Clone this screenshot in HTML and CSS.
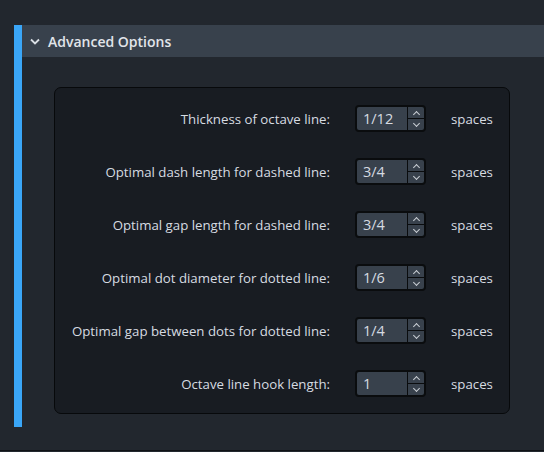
FILE: index.html
```html
<!DOCTYPE html>
<html lang="en">
<head>
  <meta charset="UTF-8">
  <title>Advanced Options</title>
  <link rel="stylesheet" href="styles.css">
</head>
<body>
  <div class="page">
    <div class="section">
      <div class="section-head">
        <svg class="chevron" width="10" height="7" viewBox="0 0 10 7"><path d="M1 1.5 L5 5.5 L9 1.5" fill="none" stroke="#d9dee4" stroke-width="1.8"/></svg>
        <span>Advanced Options</span>
      </div>
      <div class="section-body">
        <div class="options">
          <div class="row">
            <label>Thickness of octave line:</label>
            <div class="spin"><span class="value">1/12</span><span class="arrows"><i class="up"></i><i class="down"></i></span></div>
            <span class="unit">spaces</span>
          </div>
          <div class="row">
            <label>Optimal dash length for dashed line:</label>
            <div class="spin"><span class="value">3/4</span><span class="arrows"><i class="up"></i><i class="down"></i></span></div>
            <span class="unit">spaces</span>
          </div>
          <div class="row">
            <label>Optimal gap length for dashed line:</label>
            <div class="spin"><span class="value">3/4</span><span class="arrows"><i class="up"></i><i class="down"></i></span></div>
            <span class="unit">spaces</span>
          </div>
          <div class="row">
            <label>Optimal dot diameter for dotted line:</label>
            <div class="spin"><span class="value">1/6</span><span class="arrows"><i class="up"></i><i class="down"></i></span></div>
            <span class="unit">spaces</span>
          </div>
          <div class="row">
            <label>Optimal gap between dots for dotted line:</label>
            <div class="spin"><span class="value">1/4</span><span class="arrows"><i class="up"></i><i class="down"></i></span></div>
            <span class="unit">spaces</span>
          </div>
          <div class="row">
            <label>Octave line hook length:</label>
            <div class="spin"><span class="value">1</span><span class="arrows"><i class="up"></i><i class="down"></i></span></div>
            <span class="unit">spaces</span>
          </div>
        </div>
      </div>
    </div>
  </div>
</body>
</html>
```

FILE: styles.css
```css
* {
  margin: 0;
  padding: 0;
  box-sizing: border-box;
}

body {
  width: 544px;
  height: 452px;
  background: #22272e;
  font-family: "Open Sans", "Noto Sans", sans-serif;
  font-size: 13.25px;
  color: #d6dbe1;
  overflow: hidden;
}

.page {
  padding-top: 25px;
  padding-left: 14px;
  height: 451px;
  border-bottom: 1px solid #0f1215;
}

.section {
  border-left: 8px solid #3aa6f7;
  height: 402px;
}

.section-head {
  height: 32px;
  background: #38414c;
  display: flex;
  align-items: center;
  gap: 8px;
  padding-left: 8px;
  font-size: 14px;
  font-weight: 600;
  color: #e1e5ea;
}

.chevron {
  margin-top: 1px;
}

.section-body {
  padding: 30px 34px 0 32px;
}

.options {
  background: #181c22;
  border: 1px solid #07090b;
  border-radius: 7px;
  height: 327px;
  padding-top: 17px;
  display: flex;
  flex-direction: column;
  gap: 26px;
}

.row {
  display: flex;
  align-items: center;
  height: 27px;
}

.row label {
  width: 275px;
  text-align: right;
}

.spin {
  margin-left: 25px;
  width: 71px;
  height: 27px;
  display: flex;
  border: 2px solid #0a0c0e;
  border-radius: 4px;
  background: #38414c;
  overflow: hidden;
}

.value {
  flex: 1;
  padding-left: 6px;
  line-height: 23px;
  font-size: 14.5px;
}

.arrows {
  width: 17px;
  display: flex;
  flex-direction: column;
  border-left: 1px solid #0a0c0e;
}

.arrows i {
  flex: 1;
  position: relative;
}

.arrows .up {
  border-bottom: 1px solid #0a0c0e;
}

.arrows i::after {
  content: '';
  position: absolute;
  left: 6px;
  width: 4px;
  height: 4px;
  border-left: 1.3px solid #c9ced4;
  border-top: 1.3px solid #c9ced4;
}

.arrows .up::after {
  top: 5px;
  transform: rotate(45deg);
}

.arrows .down::after {
  top: 2px;
  transform: rotate(225deg);
}

.unit {
  margin-left: 25px;
}
```
